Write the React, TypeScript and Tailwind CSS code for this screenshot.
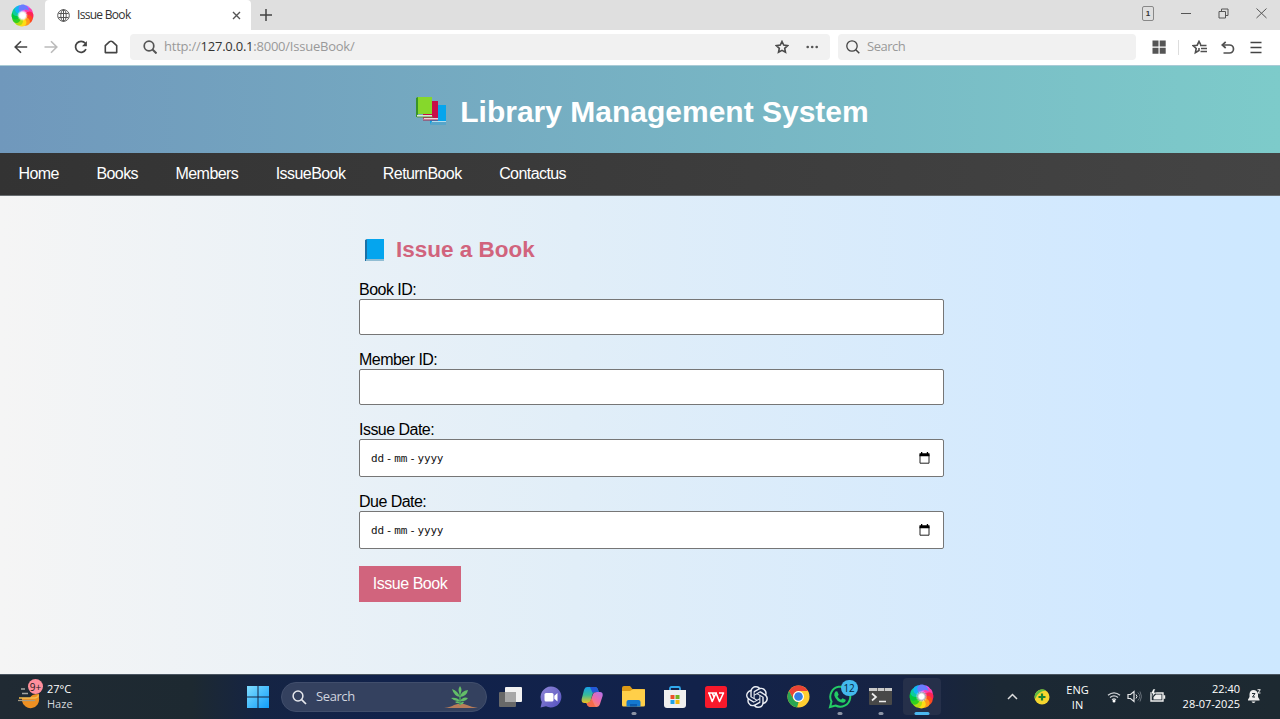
import React from "react";

type IconProps = { w: number; h: number; box?: string; className?: string; children: React.ReactNode };

function Icon({ w, h, box, className = "", children }: IconProps) {
  return (
    <svg width={w} height={h} viewBox={box ?? `0 0 ${w} ${h}`} fill="none" className={`block shrink-0 ${className}`}>
      {children}
    </svg>
  );
}

function Swirl({ size }: { size: number }) {
  const colors = ["#e052f5", "#fb3fae", "#ff2452", "#ff4a1f", "#ff9a1a", "#ffdc14", "#b4dc14", "#31d01f", "#05c93c", "#0ccba0", "#12b4f5", "#6a7cff"];
  return (
    <div className="relative">
      <Icon w={size} h={size} box="0 0 24 24">
        {colors.map((c, i) => (
          <path key={c} d="M12 8.500C10.500 5 12.500 1 16.500 1.500C20.500 3 22 7 20.500 11C18.500 7.500 15.500 6.500 12 8.500Z" fill={c} transform={`rotate(${i * 30} 12 12)`} />
        ))}
      </Icon>
      <div className="absolute inset-0 bg-[radial-gradient(circle,#fff_0%,#fff_14%,transparent_34%)]" />
    </div>
  );
}

function TabStrip() {
  return (
    <div className="flex h-[30px] bg-[#dfdfdf]">
      <div className="flex w-[45px] items-center pl-[11px]">
        <Swirl size={23} />
      </div>
      <div className="flex h-[30px] w-[206px] items-center rounded-t-[4px] bg-white pl-3 pr-[10px]">
        <Icon w={13} h={13} box="0 0 13 13">
          <g stroke="#555" strokeWidth="1">
            <circle cx="6.5" cy="6.5" r="5.8" />
            <ellipse cx="6.5" cy="6.5" rx="2.7" ry="5.8" />
            <path d="M6.5.7v11.6M1.6 4.500h9.8M1.6 8.500h9.8" />
          </g>
        </Icon>
        <span className="ml-[7px] flex-1 whitespace-nowrap text-[12px] tracking-[-0.7px] text-[#333]">Issue Book</span>
        <Icon w={9} h={9} className="mt-[1px]">
          <path d="M1 1l7 7M8 1L1 8" stroke="#555" strokeWidth="1.4" />
        </Icon>
      </div>
      <div className="flex flex-1 items-center pl-[9px]">
        <Icon w={12} h={12}>
          <path d="M6 0v12M0 6h12" stroke="#444" strokeWidth="1.5" />
        </Icon>
      </div>
      <div className="flex items-center pb-[3px] pr-[13px]">
        <div className="mr-[27px] flex h-[15px] w-[12px] items-center justify-center rounded-[2px] border border-[#888] font-['Liberation_Sans',sans-serif] text-[8px] font-bold text-[#333]">1</div>
        <Icon w={10} h={10} className="mr-[27px]">
          <path d="M0 4.500h10" stroke="#555" />
        </Icon>
        <Icon w={11} h={11} className="mr-[27px]">
          <path d="M1 3.500h6.500v6.500H1zM3.500 3.500V1H10v6.500H7.500" stroke="#555" />
        </Icon>
        <Icon w={11} h={11}>
          <path d="M.5 .5l10 9.500M10.500 .5L.5 10" stroke="#555" />
        </Icon>
      </div>
    </div>
  );
}

function Toolbar() {
  return (
    <div className="flex h-[36px] items-center border-b border-[#a9cbd6] bg-white pl-[14px]">
      <Icon w={14} h={14} className="-mt-[1px] mr-[16px]">
        <path d="M13.2 7H1.5M7 1.2L1.2 7L7 12.8" stroke="#444" strokeWidth="1.6" />
      </Icon>
      <Icon w={14} h={14} className="-mt-[1px] mr-[16px]">
        <path d="M.5 7h12M7 1.2L12.8 7L7 12.8" stroke="#bbb" strokeWidth="1.6" />
      </Icon>
      <Icon w={14} h={14} className="-mt-[1px] mr-[16px]">
        <path d="M12 9.2A5.5 5.5 0 1 1 11.3 3.3" stroke="#444" strokeWidth="1.7" />
        <path d="M12.9 1v5.2H8L12.9 1Z" fill="#444" />
      </Icon>
      <Icon w={14} h={14} className="-mt-[1px] mr-[12px]">
        <path d="M1.300 12.600V5.600L5.600 1.700Q7 .8 8.400 1.700L12.700 5.600V12.600Z" stroke="#444" strokeWidth="1.6" strokeLinejoin="round" />
      </Icon>
      <div className="-mt-[1px] flex h-[26px] w-[700px] items-center rounded-[4px] bg-[#f1f1f1] pl-[13px] pr-[11px]">
        <Icon w={14} h={14}>
          <circle cx="6" cy="6" r="4.8" stroke="#555" strokeWidth="1.7" />
          <path d="M9.5 9.5l4 4" stroke="#555" strokeWidth="2" />
        </Icon>
        <span className="ml-[7px] flex-1 whitespace-nowrap text-[13px] tracking-[-0.230px] text-[#999]">
          http://<span className="text-[#333]">127.0.0.1</span>:8000/IssueBook/
        </span>
        <Icon w={14} h={14} className="mr-[17px]">
          <path d="M7 1.500l1.700 3.600 4 .5-3 2.700.8 4L7 10.400l-3.500 1.900.8-4-3-2.700 4-.5Z" stroke="#4a4a4a" strokeWidth="1.600" />
        </Icon>
        <Icon w={13} h={4} className="-mt-[1px]">
          <g fill="#555"><circle cx="1.7" cy="2" r="1.3" /><circle cx="6.2" cy="2" r="1.3" /><circle cx="10.7" cy="2" r="1.3" /></g>
        </Icon>
      </div>
      <div className="-mt-[1px] ml-[8px] flex h-[26px] w-[298px] items-center rounded-[4px] bg-[#f1f1f1] pl-[8px]">
        <Icon w={14} h={14}>
          <circle cx="6" cy="6" r="5.2" stroke="#444" strokeWidth="1.3" />
          <path d="M9.8 9.8l3.5 3.500" stroke="#444" strokeWidth="1.5" />
        </Icon>
        <span className="ml-[7px] text-[13px] tracking-[-0.5px] text-[#999]">Search</span>
      </div>
      <Icon w={14} h={14} className="-mt-[1px] ml-[16px]">
        <path d="M.5.5h6v6h-6zM7.700.5h6v6h-6zM.5 7.700h6v6h-6zM7.700 7.700h6v6h-6z" fill="#555" />
      </Icon>
      <div className="ml-[12px] h-[15px] w-px bg-[#ddd]" />
      <Icon w={16} h={15} className="ml-[13px]">
        <path d="M8.800 4.800L7 1.400 5.200 5.200l-4 .5 3 2.800-.8 4.200L7 10.500V8" stroke="#505050" strokeWidth="1.600" />
        <path d="M8 5.500h6.500M9 8.500h6M8.500 11.500H15" stroke="#505050" strokeWidth="1.500" />
      </Icon>
      <Icon w={14} h={14} className="ml-[13px]">
        <path d="M1.500 4h7a3.900 3.900 0 0 1 0 8H2.500" stroke="#505050" strokeWidth="1.700" />
        <path d="M4.700.9L1.200 4l3.500 3" stroke="#505050" strokeWidth="1.700" />
      </Icon>
      <Icon w={12} h={13} className="-mt-[1px] ml-[15px]">
        <path d="M.5 1.500h11M.5 6.500h11M.5 11.500h11" stroke="#444" strokeWidth="1.500" />
      </Icon>
    </div>
  );
}

function Field({ label, date = false }: { label: string; date?: boolean }) {
  return (
    <div className={date ? "h-[72px]" : "h-[70px]"}>
      <label className="block h-[18px] text-[16px] leading-[18px] tracking-[-0.530px]">{label}</label>
      <div className={`${date ? "h-[38px] pt-[2px]" : "h-[36px]"} flex w-[585px] items-center justify-between rounded-[2px] border border-[#767676] bg-white pl-[11px] pr-[13px]`}>
        {date && (
          <>
            <span className="mt-[1px] flex font-['DejaVu_Sans_Mono','monospace'] text-[11px] tracking-[-0.200px] text-[#111]">
              <span>dd</span><span className="mx-[2px]">-</span><span>mm</span><span className="mx-[2px]">-</span><span>yyyy</span>
            </span>
            <Icon w={11} h={12} className="-mt-[2px]">
              <path d="M1 2.500h9v8.700H1z" stroke="#222" />
              <path d="M.5 1.300h10v3H.5zM2 0h1.300v2H2zM7.800 0h1.300v2H7.800z" fill="#000" />
            </Icon>
          </>
        )}
      </div>
    </div>
  );
}

function Task({ children, dot = false, active = false }: { children: React.ReactNode; dot?: boolean; active?: boolean }) {
  return (
    <div className="flex h-[44px] w-[41.2px] justify-center">
      <div className={`relative flex h-[37px] w-[38px] items-center justify-center rounded-[4px] ${active ? "bg-[#26304a]" : ""} mt-[3px]`}>
        {children}
        {dot && <span className="absolute bottom-0 left-1/2 h-[3px] w-[5px] -translate-x-1/2 rounded-full bg-[#8c93a5]" />}
        {active && <span className="absolute bottom-0 left-1/2 h-[3px] w-[15px] -translate-x-1/2 rounded-full bg-[#4cb8f0]" />}
      </div>
    </div>
  );
}

function TaskIcons() {
  return (
    <div className="ml-[2.500px] flex">
      <Task>
        <Icon w={23} h={20}>
          <rect x="6" width="17" height="15" rx="1" fill="#f2f2f2" />
          <rect y="5" width="17" height="15" rx="1" fill="#686868" />
          <rect x="6" y="5" width="11" height="10" fill="#a8a8a8" />
        </Icon>
      </Task>
      <Task>
        <Icon w={22} h={22}>
          <defs><linearGradient id="chat" x1="0" y1="0" x2="1" y2="1"><stop stopColor="#9087d6" /><stop offset="1" stopColor="#5350c0" /></linearGradient></defs>
          <path d="M11 0.5A10.5 10.5 0 1 1 6 20.3L.6 21.5 1.8 16A10.5 10.5 0 0 1 11 .5Z" fill="url(#chat)" />
          <rect x="4.5" y="7" width="9" height="8.5" rx="1.5" fill="#fff" />
          <path d="M14.3 9.8L17.5 7v8.5l-3.2-2.8Z" fill="#fff" />
        </Icon>
      </Task>
      <Task>
        <Icon w={22} h={20}>
          <defs>
            <linearGradient id="coA" x1="0" y1="0" x2="0" y2="1"><stop stopColor="#179ee8" /><stop offset=".5" stopColor="#38bb98" /><stop offset="1" stopColor="#f2c31f" /></linearGradient>
            <linearGradient id="coB" x1="1" y1="0" x2=".2" y2="1"><stop stopColor="#af72f2" /><stop offset=".5" stopColor="#ed6ba8" /><stop offset="1" stopColor="#ff9a40" /></linearGradient>
          </defs>
          <path d="M6 0h8q2 0 2.8 2l1 3h-3.5q-2 0-2.7 2L9.5 14q-.8 2-3 2H3.5Q0 16 .7 12L3 3Q3.8 0 6 0Z" fill="url(#coA)" />
          <path d="M9 0h5q2 0 2.800 2l1 3h-3.500q-2 0-2.700 1L9 0Z" fill="#2458d8" />
          <path d="M16 5h3q3.300 0 2.600 4L19 17q-1 3-3.500 3H9q-2.300 0-3.200-3L5.500 16h1q2.200 0 3-2L12 7q.7-2 4-2Z" fill="url(#coB)" />
          <path d="M5.500 16h1q2.200 0 3-2l1-2.500L13 17q.8 3 2.500 3H9q-2.300 0-3.200-3Z" fill="#f46b4b" />
        </Icon>
      </Task>
      <Task dot>
        <Icon w={23} h={21}>
          <path d="M0 2Q0 0 2 0h6l2.5 3H21q2 0 2 2v13H0Z" fill="#dc9a16" />
          <path d="M0 5h8l3-1.7h12V19q0 1.500-1.500 1.500h-20Q0 20.500 0 19Z" fill="#ffcf49" />
          <path d="M4.500 20.500V16q0-2 2-2h10q2 0 2 2v4.500Z" fill="#1478d0" />
          <path d="M8 20.500V18h7v2.500Z" fill="#0a5baf" />
        </Icon>
      </Task>
      <Task>
        <Icon w={22} h={22}>
          <path d="M6 6V2.500Q6 1 7.500 1h7Q16 1 16 2.500V6" stroke="#31a9ed" strokeWidth="1.8" />
          <path d="M0 4h22v15q0 3-3 3H3q-3 0-3-3Z" fill="#efefef" />
          <path d="M6.500 9h4v4h-4z" fill="#ee5028" /><path d="M11.500 9h4v4h-4z" fill="#75b21e" />
          <path d="M6.500 14h4v4h-4z" fill="#1da0e8" /><path d="M11.500 14h4v4h-4z" fill="#f5b50a" />
        </Icon>
      </Task>
      <Task>
        <Icon w={22} h={22}>
          <rect width="22" height="22" rx="2.500" fill="#f7192b" />
          <path d="M3 7h9M4 7l3.200 8.500L11 7l3.500 8.500L18.500 7H14M7.500 7.500L9 11" stroke="#fff" strokeWidth="1.600" strokeLinejoin="round" />
        </Icon>
      </Task>
      <Task>
        <Icon w={22} h={22} box="0 0 24 24">
          <path fill="#e9ecf2" d="M22.282 9.821a5.985 5.985 0 0 0-.516-4.910 6.046 6.046 0 0 0-6.510-2.900A6.065 6.065 0 0 0 4.981 4.182a5.985 5.985 0 0 0-3.998 2.900 6.046 6.046 0 0 0 .743 7.097 5.980 5.980 0 0 0 .510 4.911 6.051 6.051 0 0 0 6.515 2.900A5.985 5.985 0 0 0 13.260 24a6.056 6.056 0 0 0 5.772-4.206 5.990 5.990 0 0 0 3.998-2.900 6.056 6.056 0 0 0-.748-7.073zM13.260 22.430a4.476 4.476 0 0 1-2.876-1.040l.142-.081 4.778-2.758a.795.795 0 0 0 .393-.681v-6.737l2.020 1.169a.071.071 0 0 1 .038.052v5.583a4.504 4.504 0 0 1-4.495 4.493zM3.600 18.304a4.471 4.471 0 0 1-.535-3.014l.142.085 4.783 2.758a.771.771 0 0 0 .781 0l5.843-3.369v2.333a.080.080 0 0 1-.033.061L9.740 19.950a4.499 4.499 0 0 1-6.140-1.646zM2.341 7.896a4.485 4.485 0 0 1 2.366-1.973V11.600a.766.766 0 0 0 .388.676l5.815 3.355-2.020 1.168a.076.076 0 0 1-.071 0l-4.830-2.786A4.504 4.504 0 0 1 2.341 7.872zm16.596 3.856-5.833-3.387 2.015-1.164a.076.076 0 0 1 .071 0l4.830 2.791a4.494 4.494 0 0 1-.677 8.105v-5.678a.790.790 0 0 0-.406-.667zm2.011-3.023-.142-.085-4.774-2.782a.776.776 0 0 0-.785 0L9.409 9.230V6.897a.066.066 0 0 1 .028-.061l4.830-2.787a4.499 4.499 0 0 1 6.681 4.660zM8.307 12.863l-2.020-1.164a.080.080 0 0 1-.038-.057V6.074a4.499 4.499 0 0 1 7.376-3.453l-.142.080L8.704 5.460a.795.795 0 0 0-.393.681zm1.097-2.366L12.006 8.998l2.607 1.500v2.999l-2.597 1.500-2.607-1.500z" />
        </Icon>
      </Task>
      <Task>
        <Icon w={23} h={23} box="0 0 24 24">
          <circle cx="12" cy="12" r="11.500" fill="#ffce31" />
          <path d="M2 6.300A11.500 11.500 0 0 1 22 6.300H12A5.800 5.800 0 0 0 7 15Z" fill="#ea4335" />
          <path d="M2 6.300L7 15Q9 18 12.200 17.600L10.500 23.400A11.500 11.500 0 0 1 2 6.300Z" fill="#2aa552" />
          <circle cx="12" cy="12" r="5.700" fill="#fff" /><circle cx="12" cy="12" r="4.500" fill="#347de4" />
        </Icon>
      </Task>
      <Task dot>
        <Icon w={24} h={24} box="0 0 24 24">
          <path d="M2 22l1.500-5.500A10 10 0 1 1 7.500 20.500Z" stroke="#24cc65" strokeWidth="2" />
          <path d="M7.500 6.500l1.700-.2 1.500 3.500-1.200 1.700q1.300 2.200 3.500 3.200l1.500-1.500 3.200 1.600q0 3-3 3Q8.700 17.200 6.300 10.500 6 8 7.500 6.500Z" fill="#24cc65" />
        </Icon>
        <span className="absolute top-[2px] left-[20px] flex h-[16px] w-[17px] items-center justify-center rounded-full bg-[#43b9ed] text-[10px] leading-none text-[#07233b]">12</span>
      </Task>
      <Task dot>
        <Icon w={23} h={17}>
          <rect width="23" height="17" rx="1" fill="#484848" />
          <rect width="23" height="3" fill="#c9c9c9" /><path d="M8 0h1v3H8zM15 0h1v3h-1z" fill="#666" />
          <path d="M3 5.500l4 3.500-4 3.500M10 13.500h7" stroke="#eee" strokeWidth="1.700" />
        </Icon>
      </Task>
      <Task active><Swirl size={25} /></Task>
    </div>
  );
}

function Taskbar() {
  return (
    <div className="flex h-[45px] border-t border-[#4a5560] bg-[linear-gradient(90deg,#202a33_0%,#1d2931_15%,#152443_20%,#11224b_30%,#12224a_55%,#172342_72%,#1b2834_78%,#1d2931_100%)] text-white">
      <div className="flex w-[247px] items-start pl-[18px]">
        <div className="relative mt-[8px] h-[26px] w-[24px]">
          <Icon w={24} h={26}>
            <path d="M4 15h8q1-4 9-4v4a8.500 8.500 0 0 1-17 3Z" fill="#ee9022" />
            <path d="M4 10.500h6M3 6h4" stroke="#a5a6a3" strokeWidth="1.300" />
            <path d="M1 15h16q4-1 3-3" stroke="#f3bd52" strokeWidth="1.300" /><path d="M0 17.500h17" stroke="#a69b82" strokeWidth="1.300" />
          </Icon>
          <span className="absolute -top-[4px] left-[10px] flex h-[15px] w-[15px] items-center justify-center rounded-full bg-[#ff8f9d] text-[10px] leading-none text-[#231a20]">9+</span>
        </div>
        <div className="ml-[5px] mt-[6px] text-[11px] leading-[15px]">
          <div>27°C</div><div className="text-[#d4d8dc]">Haze</div>
        </div>
      </div>
      <Icon w={22} h={22} className="mt-[11px]">
        <defs><linearGradient id="win" x1="0" y1="0" x2="22" y2="22" gradientUnits="userSpaceOnUse"><stop stopColor="#7fddff" /><stop offset="1" stopColor="#109dfa" /></linearGradient></defs>
        <path d="M0 0h10.500v10.500H0zM11.500 0H22v10.500H11.500zM0 11.500h10.500V22H0zM11.500 11.500H22V22H11.500z" fill="url(#win)" />
      </Icon>
      <div className="ml-[12px] mt-[7px] flex h-[30px] w-[206px] items-center rounded-full border border-[#414e6c] bg-[#34415f] pl-[10px] pr-[8px]">
        <Icon w={15} h={15}>
          <circle cx="6" cy="6" r="4.900" stroke="#e5e7ec" strokeWidth="1.500" /><path d="M9.600 9.600l4.400 4.400" stroke="#e5e7ec" strokeWidth="1.700" />
        </Icon>
        <span className="ml-[9px] flex-1 text-[13px] tracking-[-0.4px] text-[#d0d5df]">Search</span>
        <Icon w={34} h={24}>
          <path d="M0 23q7-1 10-3 7-3 13 0 4 2 11 3Z" fill="#b87c59" />
          <path d="M16 20V7" stroke="#47a75c" strokeWidth="1.500" />
          <path d="M16 9q-3-4 0-8 3 4 0 8ZM16 12Q10 11 8 4q6 2 8 8ZM16 12q1-6 8-7-1 6-8 7ZM16 16q-5 1-9-3 6-1 9 3ZM16 16q3-5 8-3-3 4-8 3ZM16 18q-3 1-5-1 3-2 5 1ZM16 19q2-3 4-2-1 3-4 2Z" fill="#63bd68" />
        </Icon>
      </div>
      <TaskIcons />
      <div className="ml-auto flex pr-[19px]">
        <Icon w={11} h={7} className="mt-[18px]"><path d="M1 6l4.500-4.500L10 6" stroke="#ddd" strokeWidth="1.500" /></Icon>
        <Icon w={16} h={16} className="ml-[16px] mt-[14px]">
          <circle cx="8" cy="8" r="7.500" fill="#f5d62f" />
          <path d="M1 10a7.500 7.500 0 0 1 11-8.500Q4 2 1 10Z" fill="#5dbd43" />
          <path d="M8 4.500v7M4.500 8h7" stroke="#198233" strokeWidth="2.200" />
        </Icon>
        <div className="ml-[14px] mt-[7px] w-[27px] text-center text-[11px] leading-[15px]">ENG<br />IN</div>
        <Icon w={14} h={12} className="ml-[16px] mt-[16px]">
          <path d="M1 4.300q6-5 12 0M3 6.600q4-3.300 8 0M5 8.700q2-1.500 4 0" stroke="#cfd3d7" strokeWidth="1.300" /><circle cx="7" cy="10" r="1.500" fill="#fff" />
        </Icon>
        <Icon w={15} h={13} className="ml-[6px] mt-[15px]">
          <path d="M1 4.500h2.500L7 1.500v10l-3.500-3H1Z" stroke="#e4e6e8" strokeWidth="1.200" />
          <path d="M9 4.500q2 2 0 4" stroke="#e4e6e8" /><path d="M10.800 2.500q4 4 0 8M13 1.500q3 5 0 10" stroke="#68717a" />
        </Icon>
        <Icon w={16} h={14} className="ml-[8px] mt-[14px]">
          <path d="M1 4h12v8H1zM14.500 6.300v3.500" stroke="#eee" strokeWidth="1.400" />
          <path d="M6 5.500h5.500v5H3.500V8Z" fill="#eee" /><path d="M3.300 0L1 4.500h2L2.300 8 6 3.500H4L5.300 0Z" fill="#fff" stroke="#1d2931" strokeWidth=".4" />
        </Icon>
        <div className="ml-[14px] mt-[6px] w-[60px] whitespace-nowrap text-right text-[11px] leading-[15px]">22:40<br />28-07-2025</div>
        <Icon w={14} h={15} className="ml-[7px] mt-[14px]">
          <path d="M1 10.500l1.500-2.500V5Q3 1 6.500 1T11 5v3l1.500 2.500v1H1Z" fill="#eee" /><path d="M4.500 12.500h4Q6.500 15.500 4.500 12.500Z" fill="#eee" />
          <path d="M5 4.500h3L5.500 8H8" stroke="#1d2931" /><path d="M10.500 .7h2.800L11 4h2.500" stroke="#eee" />
        </Icon>
      </div>
    </div>
  );
}

export default function App() {
  return (
    <div className="flex h-[719px] w-[1280px] flex-col overflow-hidden bg-white font-['Open_Sans','Noto_Sans',sans-serif]">
      <TabStrip />
      <Toolbar />
      <div className="flex-1 bg-[linear-gradient(90deg,#f5f5f5_0%,#e1eef8_45%,#d0e8ff_90%,#cde8ff_100%)] font-['Liberation_Sans',sans-serif] text-black">
        <header className="flex h-[87px] items-center justify-center bg-[linear-gradient(90deg,#7098bc,#7dcbca)] pl-[5px] pt-[4px]">
          <Icon w={31} h={29} className="mr-[13px]">
            <path d="M14 8h16v19H14z" fill="#06a5ed" /><path d="M14 27l2-3h14v4H14Z" fill="#58a5c9" /><path d="M16 24.500h14" stroke="#b7dceb" />
            <path d="M7 4h15v18H7z" fill="#c80e48" /><path d="M7 23l1-2h14v2Z" fill="#ebd6dd" /><path d="M7 23h15" stroke="#a8244d" />
            <path d="M1 0h15v17H1z" fill="#86d82b" /><path d="M0 1l2-1v17l-1 3H0Z" fill="#399429" /><path d="M1 18h15v2H1Z" fill="#dce8d5" /><path d="M1 20h16" stroke="#539647" />
          </Icon>
          <h1 className="whitespace-nowrap text-[30px] font-bold leading-[36px] text-white">Library Management System</h1>
        </header>
        <nav className="flex h-[43px] items-center gap-[37.500px] border-b border-[#686d70] bg-[linear-gradient(90deg,#333,#444)] pl-[18.500px] text-[16px] tracking-[-0.570px] text-white">
          {["Home", "Books", "Members", "IssueBook", "ReturnBook", "Contactus"].map((item) => (
            <a key={item} href={`#${item}`}>{item}</a>
          ))}
        </nav>
        <main className="ml-[359px] pt-[40px]">
          <h2 className="mb-[17px] flex h-[28px] items-center text-[22.500px] font-bold text-[#d1647d]">
            <Icon w={19} h={23} className="ml-[6px] mr-[12px]">
              <path d="M2 0h17v20H2z" fill="#05a5ee" /><path d="M0 1l2-1v20l-1 2H0Z" fill="#1c70a5" /><path d="M1 20h18v2H1Z" fill="#91bdd3" />
            </Icon>
            Issue a Book
          </h2>
          <Field label="Book ID:" />
          <Field label="Member ID:" />
          <Field label="Issue Date:" date />
          <Field label="Due Date:" date />
          <button className="mt-[1px] h-[36px] w-[102px] bg-[#d1647d] text-[16px] tracking-[-0.450px] text-white">Issue Book</button>
        </main>
      </div>
      <Taskbar />
    </div>
  );
}
